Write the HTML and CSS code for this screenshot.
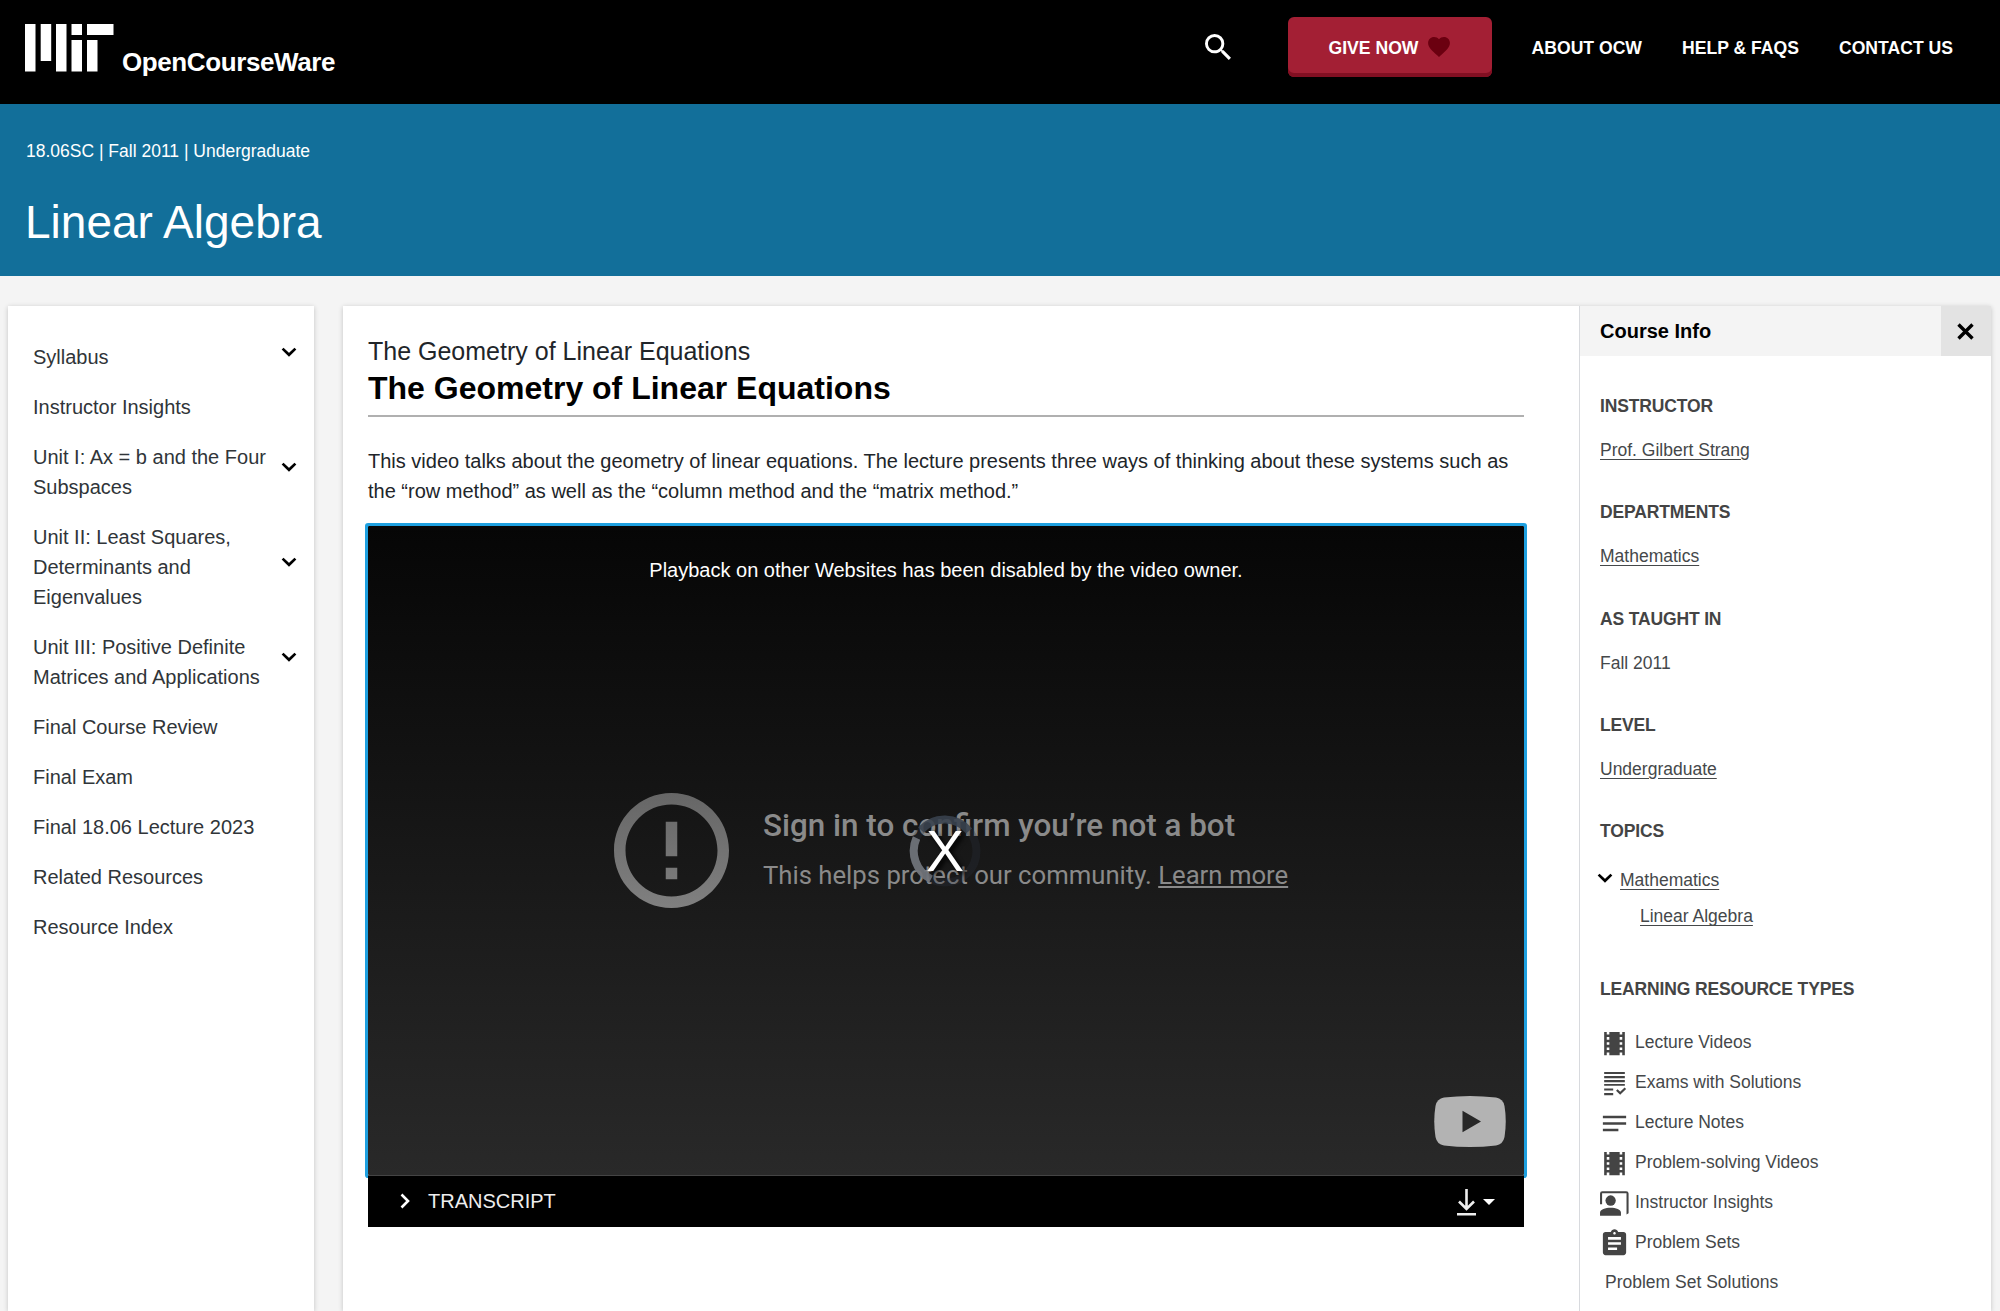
FILE: index.html
```html
<!DOCTYPE html>
<html lang="en">
  <head>
    <meta charset="utf-8" />
    <title>The Geometry of Linear Equations | Linear Algebra | MIT OpenCourseWare</title>
    <link rel="stylesheet" href="styles.css">
  </head>
  <body>
    <!-- shared icons -->
    <svg class="defs" width="0" height="0">
      <symbol id="chevron" viewBox="0 0 16 10">
        <path d="M1.6 1.6L8 7.8l6.4-6.2" fill="none" stroke="currentColor" stroke-width="2.7" />
      </symbol>
      <symbol id="theaters" viewBox="0 0 24 24">
        <path d="M18 3v2h-2V3H8v2H6V3H4v18h2v-2h2v2h8v-2h2v2h2V3h-2zM8 17H6v-2h2v2zm0-4H6v-2h2v2zm0-4H6V7h2v2zm10 8h-2v-2h2v2zm0-4h-2v-2h2v2zm0-4h-2V7h2v2z" />
      </symbol>
    </svg>

    <header class="header">
      <a class="logo">
        <svg class="mit" viewBox="0 0 89 48" width="89" height="48">
          <path d="M0 0h10.5v47.5H0zM15.7 0h10.5v37H15.700zM31 0h10.500v47.500H31zM46.500 0H57v11H46.500zM46.500 16H57v31.500H46.500zM62 0h26.500v11H62zM62 16h10.500v31.500H62z" fill="#fff" />
        </svg>
        <span class="logo-text">OpenCourseWare</span>
      </a>
      <nav class="nav">
        <svg class="search" viewBox="3 3 17.500 17.500" width="26" height="26">
          <path fill="#fff" d="M15.500 14h-.79l-.28-.27A6.471 6.471 0 0 0 16 9.500 6.500 6.500 0 1 0 9.500 16c1.610 0 3.090-.59 4.230-1.570l.27.28v.79l5 4.990L20.490 19l-4.990-5zm-6 0C7.010 14 5 11.990 5 9.500S7.010 5 9.500 5 14 7.010 14 9.500 11.990 14 9.500 14z" />
        </svg>
        <a class="give">
          <span>GIVE NOW</span>
          <svg viewBox="2 3 20 18.350" width="22" height="20">
            <path fill="#6b0010" d="M12 21.350l-1.450-1.320C5.400 15.360 2 12.280 2 8.500 2 5.420 4.420 3 7.500 3c1.740 0 3.410.81 4.500 2.090C13.090 3.810 14.760 3 16.500 3 19.580 3 22 5.420 22 8.500c0 3.780-3.400 6.860-8.550 11.540L12 21.350z" />
          </svg>
        </a>
        <a class="nav-link about">ABOUT OCW</a>
        <a class="nav-link help">HELP &amp; FAQS</a>
        <a class="nav-link contact">CONTACT US</a>
      </nav>
    </header>

    <div class="banner">
      <div class="term">18.06SC | Fall 2011 | Undergraduate</div>
      <h1>Linear Algebra</h1>
    </div>

    <div class="page">
      <aside class="course-nav">
        <ul>
          <li><a>Syllabus</a><svg class="chev"><use href="#chevron" /></svg></li>
          <li><a>Instructor Insights</a></li>
          <li><a>Unit I: Ax = b and the Four<br />Subspaces</a><svg class="chev"><use href="#chevron" /></svg></li>
          <li><a>Unit II: Least Squares,<br />Determinants and<br />Eigenvalues</a><svg class="chev"><use href="#chevron" /></svg></li>
          <li><a>Unit III: Positive Definite<br />Matrices and Applications</a><svg class="chev"><use href="#chevron" /></svg></li>
          <li><a>Final Course Review</a></li>
          <li><a>Final Exam</a></li>
          <li><a>Final 18.06 Lecture 2023</a></li>
          <li><a>Related Resources</a></li>
          <li><a>Resource Index</a></li>
        </ul>
      </aside>

      <div class="content">
        <main class="main">
          <h4>The Geometry of Linear Equations</h4>
          <h2>The Geometry of Linear Equations</h2>
          <p>This video talks about the geometry of linear equations. The lecture presents three ways of thinking about these systems such as<br />the “row method” as well as the “column method and the “matrix method.”</p>

          <div class="video">
            <div class="notice">Playback on other Websites has been disabled by the video owner.</div>
            <div class="error">
              <svg viewBox="2 2 20 20" width="115" height="115">
                <linearGradient id="ring" x1="0" y1="0" x2="0" y2="1">
                  <stop offset="0" stop-color="#666" />
                  <stop offset="1" stop-color="#808080" />
                </linearGradient>
                <path fill="url(#ring)" d="M11 15h2v2h-2zm0-8h2v6h-2zm.99-5C6.470 2 2 6.480 2 12s4.470 10 9.990 10C17.520 22 22 17.520 22 12S17.520 2 11.990 2zM12 20c-4.420 0-8-3.580-8-8s3.580-8 8-8 8 3.580 8 8-3.580 8-8 8z" />
              </svg>
              <div class="error-text">
                <div class="error-title">Sign in to confirm you’re not a bot</div>
                <div class="error-sub">This helps protect our community. <a>Learn more</a></div>
              </div>
            </div>
            <div class="spinner">
              <svg viewBox="0 0 72 72" width="72" height="72" fill="none" stroke-width="8">
                <circle cx="36" cy="36" r="31.500" stroke="#2b333f" stroke-opacity=".3" />
                <path d="M12 15A31.500 31.500 0 0 1 60 16" stroke="#3a434f" stroke-opacity=".85" />
                <path d="M7.500 23A31.500 31.500 0 0 0 22 64" stroke="#73777d" stroke-opacity=".9" />
              </svg>
              <span>X</span>
            </div>
            <svg class="youtube" viewBox="0 0 72 51" width="72" height="51">
              <path fill="#b3b3b3" d="M10 1.500Q36-1.500 62 1.500Q69 2.500 70.500 10Q73 25.500 70.500 41Q69 48.500 62 49.500Q36 52.500 10 49.500Q3 48.500 1.500 41Q-1 25.500 1.500 10Q3 2.500 10 1.500z" />
              <path fill="#272727" d="M28.500 14.700v21.600L47 25.500z" />
            </svg>
          </div>
          <div class="transcript">
            <svg class="tr-chev" viewBox="0 0 10 16" width="10" height="16">
              <path d="M1.500 1.500L8 8l-6.500 6.500" fill="none" stroke="#fff" stroke-width="2.600" />
            </svg>
            <span>TRANSCRIPT</span>
            <svg class="download" viewBox="0 0 19 27" width="19" height="27">
              <path d="M9.500 0v19.500M2 12.500l7.500 7.500 7.500-7.500M0 25.300h19" fill="none" stroke="#eee" stroke-width="2.600" />
            </svg>
            <i class="caret"></i>
          </div>
        </main>

        <aside class="info">
          <div class="info-head">
            <h3>Course Info</h3>
            <div class="close">
              <svg viewBox="0 0 17 17" width="17" height="17">
                <path d="M1.500 1.500l14 14M15.500 1.500l-14 14" stroke="#000" stroke-width="3.400" />
              </svg>
            </div>
          </div>
          <div class="info-body">
            <h5>INSTRUCTOR</h5>
            <div class="value"><a>Prof. Gilbert Strang</a></div>
            <h5>DEPARTMENTS</h5>
            <div class="value"><a>Mathematics</a></div>
            <h5>AS TAUGHT IN</h5>
            <div class="value">Fall 2011</div>
            <h5>LEVEL</h5>
            <div class="value"><a>Undergraduate</a></div>
            <h5>TOPICS</h5>
            <div class="topics">
              <div class="topic"><svg class="chev"><use href="#chevron" /></svg><a>Mathematics</a></div>
              <div class="topic sub"><a>Linear Algebra</a></div>
            </div>
            <h5>LEARNING RESOURCE TYPES</h5>
            <ul class="types">
              <li><svg viewBox="0 0 24 24"><use href="#theaters" /></svg>Lecture Videos</li>
              <li><svg viewBox="0 0 24 24"><path d="M4 3h16v1.700H4zM4 6.200h16v1.700H4zM4 9.300h16V11H4zM4 12.400h16v1.400H4zM4 15.900h7v1.600H4zM4 19.400h7V21H4zM13.200 17.600l1.200-1.200 2 2 3.400-3.400 1.200 1.200-4.600 4.600z" /></svg>Exams with Solutions</li>
              <li><svg viewBox="0 0 24 24"><path d="M3 18h12v-2H3v2zM3 6v2h18V6H3zm0 7h18v-2H3v2z" /></svg>Lecture Notes</li>
              <li><svg viewBox="0 0 24 24"><use href="#theaters" /></svg>Problem-solving Videos</li>
              <li><svg viewBox="0 0 24 24"><path d="M.8 12.500V4.300Q.8 2.500 2.600 2.500H21Q22.900 2.500 22.900 4.300V19.500L21.300 20.500V4.100H2.400V12.500zM.8 21.500V19C.8 16.600 5 15.200 9 15.200S17 16.600 17 19V21.500z" /><circle cx="9" cy="9.700" r="4" /></svg>Instructor Insights</li>
              <li><svg viewBox="0 0 24 24"><path d="M19 3h-4.180C14.400 1.840 13.300 1 12 1c-1.300 0-2.400.84-2.820 2H5c-1.100 0-2 .9-2 2v14c0 1.100.9 2 2 2h14c1.100 0 2-.9 2-2V5c0-1.100-.9-2-2-2zm-7 0c.55 0 1 .45 1 1s-.45 1-1 1-1-.45-1-1 .45-1 1-1zm2 14H7v-2h7v2zm3-4H7v-2h10v2zm0-4H7V7h10v2z" /></svg>Problem Sets</li>
              <li class="plain">Problem Set Solutions</li>
            </ul>
          </div>
        </aside>
      </div>
    </div>
  </body>
</html>
```

FILE: styles.css
```css
* {
  box-sizing: border-box;
}
body {
  margin: 0;
  height: 1311px;
  overflow: hidden;
  background-color: #f4f4f4;
  font-family: "Liberation Sans", Helvetica, Arial, sans-serif;
  font-size: 20px;
  line-height: 30px;
  color: #212529;
}
h1, h2, h3, h4, h5, p, ul {
  margin: 0;
  padding: 0;
}
ul {
  list-style: none;
}
svg {
  display: block;
  flex: none;
}
.defs {
  position: absolute;
}

/* header */
.header {
  display: flex;
  justify-content: space-between;
  height: 104px;
  background-color: #000;
  color: #fff;
}
.logo {
  display: flex;
  padding: 24px 0 0 25px;
}
.logo-text {
  margin: 23px 0 0 8px;
  font-size: 26px;
  font-weight: bold;
  letter-spacing: -0.4px;
}
.nav {
  display: flex;
  align-items: flex-start;
  font-size: 17.6px;
  font-weight: bold;
}
.search {
  margin: 34px 57px 0 0;
}
.give {
  display: flex;
  align-items: center;
  gap: 10px;
  width: 204px;
  height: 60px;
  margin-top: 17px;
  padding-left: 41px;
  border-radius: 6px;
  background-color: #a31f34;
  box-shadow: inset 0 -4px #820f22;
}
.give span {
  padding-top: 1px;
}
.nav-link {
  margin: 33px 0 0 40px;
}
.contact {
  margin-right: 47px;
}

.banner {
  height: 172px;
  padding: 32px 26px 0;
  background-color: #126f9a;
  color: #fff;
}
.term {
  font-size: 17.5px;
}
h1 {
  margin-top: 26px;
  font-size: 46px;
  font-weight: normal;
  line-height: 60px;
  margin-left: -1px;
}

/* columns */
.page {
  display: flex;
  gap: 29px;
  height: 1005px;
  margin-top: 30px;
  padding: 0 9px 0 8px;
}
.course-nav,
.content {
  background-color: #fff;
  box-shadow: 0 1px 5px rgba(0, 0, 0, 0.2);
}
.course-nav {
  width: 306px;
  padding: 26px 17px 0 25px;
}
.course-nav li {
  display: flex;
  align-items: center;
  justify-content: space-between;
  padding: 10px 0;
  white-space: nowrap;
  color: #303539;
}
.chev {
  width: 16px;
  height: 10px;
  color: #000;
}
.course-nav .chev {
  margin-bottom: 10px;
}
.content {
  display: flex;
  flex: 1;
}
.main {
  flex: 1;
  padding: 30px 55px 0 25px;
}
h4 {
  font-size: 25px;
  font-weight: normal;
}
h2 {
  height: 51px;
  padding-top: 3px;
  border-bottom: 2px solid #b0b0b0;
  font-size: 32px;
  line-height: 38px;
  color: #000;
}
.main p {
  margin: 29px 0 20px;
  white-space: nowrap;
}

/* player */
.video {
  position: relative;
  height: 649px;
  background: linear-gradient(#060606, #292929);
  box-shadow: 0 0 0 3px #1ea0e0;
  border-radius: 1px;
  padding-top: 30px;
}
.notice {
  text-align: center;
  color: #fff;
  line-height: 28px;
}
.error {
  display: flex;
  align-items: center;
  gap: 34px;
  margin: 209px 0 0 246px;
  font-family: Roboto, sans-serif;
  color: #8a8a8a;
  white-space: nowrap;
}
.error-title {
  font-size: 31.4px;
  font-weight: 500;
  line-height: 46px;
}
.error-sub {
  margin-top: 3px;
  font-size: 25.7px;
  line-height: 46px;
}
.error-sub a {
  text-decoration: underline;
}
.spinner {
  position: absolute;
  left: 541px;
  top: 289px;
}
.spinner span {
  position: absolute;
  inset: 0;
  text-align: center;
  font-size: 57px;
  line-height: 73px;
  color: #fff;
  text-shadow: 3px 3px 5px #000;
}
.youtube {
  position: absolute;
  right: 18px;
  bottom: 28px;
}
.transcript {
  position: relative;
  display: flex;
  align-items: center;
  height: 52px;
  padding: 0 29px 2px 32px;
  background-color: #000;
  border-top: 1px solid #444;
  color: #eee;
}
.tr-chev {
  margin-right: 18px;
}
.download {
  margin: 3px 7px 0 auto;
}
.caret {
  border: 6px solid transparent;
  border-top-color: #fff;
  border-bottom: 0;
  margin-top: 2px;
}

/* course info */
.info {
  width: 412px;
  border-left: 1px solid #d8dade;
  color: #45484a;
  font-size: 17.5px;
}
.info-head {
  display: flex;
  justify-content: space-between;
  align-items: center;
  height: 50px;
  padding-left: 20px;
  background-color: #f4f4f4;
}
h3 {
  font-size: 20px;
  color: #000;
}
.close {
  display: flex;
  align-items: center;
  justify-content: center;
  width: 50px;
  height: 50px;
  padding-right: 1px;
  background-color: #e3e3e3;
}
.info-body {
  padding: 35px 0 0 20px;
}
.info a {
  text-decoration: underline;
  text-underline-offset: 3px;
}
h5 {
  font-size: 17.5px;
  letter-spacing: -0.15px;
  line-height: 30px;
  color: #444;
}
.value {
  margin: 14px 0 32.3px;
}
.topics {
  margin: 18.5px 0 36.8px;
}
.topic {
  display: flex;
  height: 36.5px;
}
.topic .chev {
  margin: 8px 7px 0 -3px;
}
.topic.sub {
  padding-left: 40px;
}
.types {
  padding-top: 19.5px;
}
.types li {
  display: flex;
  height: 40px;
  padding-top: 3px;
  white-space: nowrap;
}
.types svg {
  width: 31px;
  height: 31px;
  margin: 1px 5px 0 -1px;
  fill: #444;
}
.types .plain {
  padding-left: 5px;
}
```
